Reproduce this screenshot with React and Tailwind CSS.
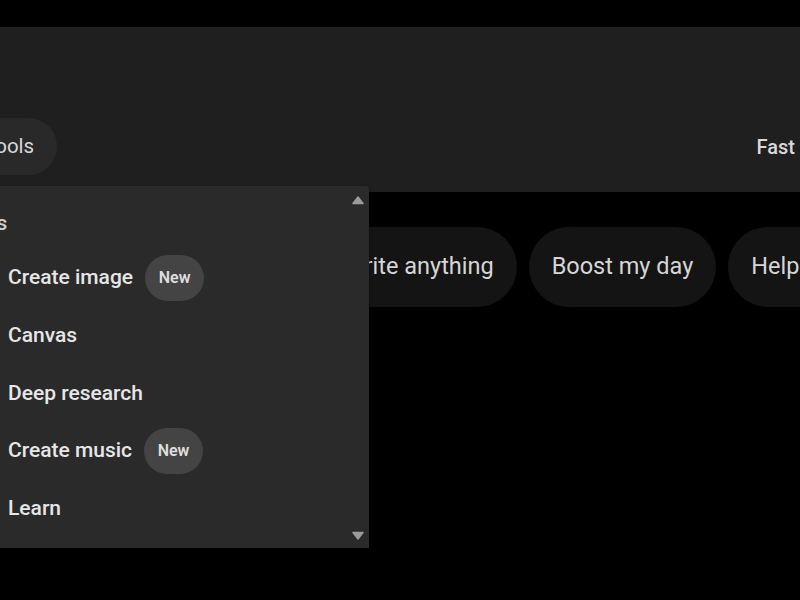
import React from "react";

const items = [
  { label: "Create image", badge: true },
  { label: "Canvas" },
  { label: "Deep research" },
  { label: "Create music", badge: true },
  { label: "Learn" },
];

const chips = ["Write anything", "Boost my day", "Help me learn"];

function Triangle({ down }) {
  return (
    <svg width="12" height="9" viewBox="0 0 12 9" className="block">
      {down ? (
        <path d="M1 1.5 H11 L6 8 Z" fill="#9b9b9b" stroke="#9b9b9b" strokeWidth="1.5" strokeLinejoin="round" />
      ) : (
        <path d="M1 7.5 H11 L6 1 Z" fill="#9b9b9b" stroke="#9b9b9b" strokeWidth="1.5" strokeLinejoin="round" />
      )}
    </svg>
  );
}

export default function App() {
  return (
    <div
      className="relative w-[800px] h-[600px] overflow-hidden bg-black text-[#e3e3e3]"
      style={{ fontFamily: "Roboto, 'Liberation Sans', Arial, sans-serif" }}
    >
      <div className="h-[27px]" />

      {/* composer area */}
      <div className="h-[165px] bg-[#1f1f1f] flex items-start justify-between pt-[91px]">
        <div className="-ml-[38px] h-[57px] flex items-center pl-[22px] pr-[23px] rounded-full bg-[#29292a] text-[20.5px] text-[#d8d8d8]">
          Tools
        </div>
        <div className="h-[57px] flex items-center -mr-[10px] text-[20px] font-medium text-[#dadada]">
          Fast ▾
        </div>
      </div>

      {/* suggestion chips */}
      <div className="mt-[35px] ml-[321px] flex gap-3 whitespace-nowrap">
        {chips.map((c) => (
          <div
            key={c}
            className="h-[80px] shrink-0 flex items-center px-[23px] rounded-full bg-[#141414] text-[23.5px] text-[#d6d6d6]"
          >
            {c}
          </div>
        ))}
      </div>

      {/* tools menu */}
      <div className="absolute left-0 top-[186px] w-[369px] h-[362px] bg-[#2a2a2b] rounded-tr-[3px] shadow-[0_1px_3px_rgba(0,0,0,0.5)]">
        <div className="absolute right-[5px] top-[10px]">
          <Triangle />
        </div>
        <div className="absolute right-[5px] bottom-[8px]">
          <Triangle down />
        </div>

        <div className="pt-[26px]">
          <div className="-ml-[44px] h-[24px] flex items-center text-[21px] font-medium text-[#d0d0d0]">
            Tools
          </div>
          <div className="mt-[13px] flex flex-col">
            {items.map((it) => (
              <div key={it.label} className="h-[57.75px] flex items-center pl-[8px] gap-3">
                <span className="text-[21px] font-medium text-[#e6e6e6]">{it.label}</span>
                {it.badge && (
                  <span className="w-[59px] h-[46px] flex items-center justify-center rounded-full bg-[#444444] text-[16px] font-semibold text-[#dedede]">
                    New
                  </span>
                )}
              </div>
            ))}
          </div>
        </div>
      </div>
    </div>
  );
}
